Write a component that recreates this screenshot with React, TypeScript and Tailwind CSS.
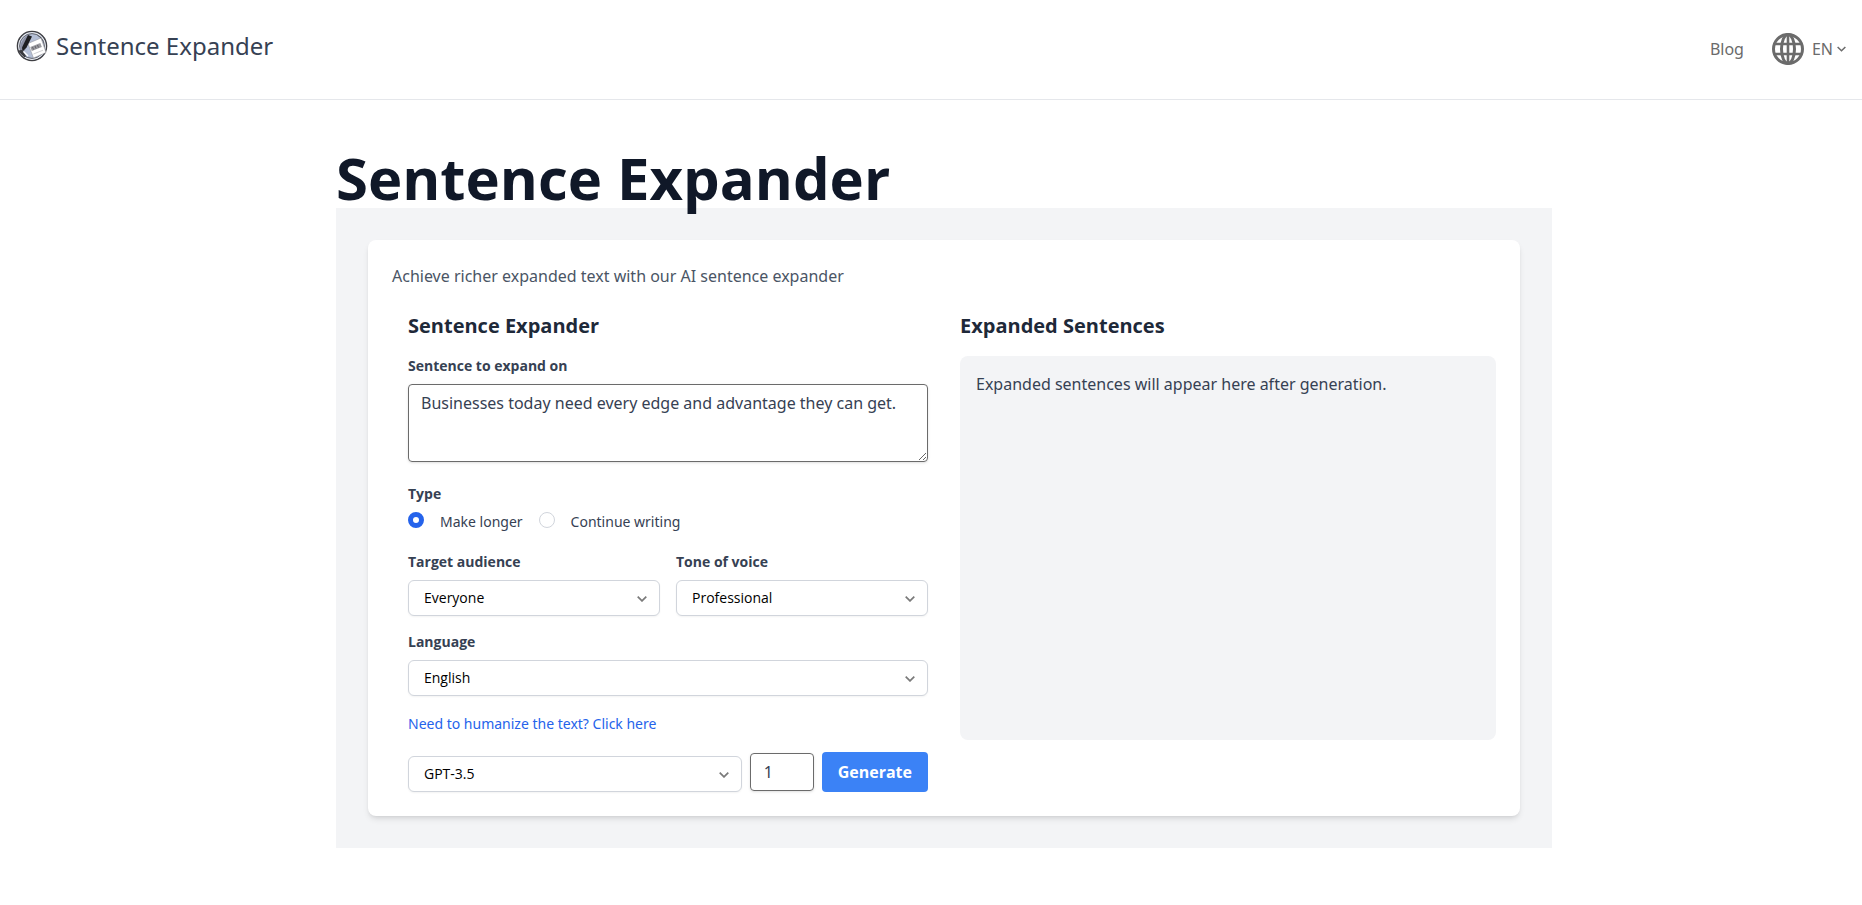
import { useState } from "react";
import type { ReactNode, SelectHTMLAttributes } from "react";

const TYPES = ["Make longer", "Continue writing"];

function Logo() {
  return (
    <svg viewBox="0 0 32 32" className="size-8" aria-hidden="true">
      <circle cx="16" cy="16" r="14.6" fill="#b4bfd6" stroke="#3f3f43" strokeWidth="1.4" />
      <circle cx="16" cy="16" r="13.300" fill="none" stroke="#f4f4f4" strokeWidth="1" />
      <circle cx="16" cy="16" r="12.400" fill="none" stroke="#4a4b52" strokeWidth="0.8" />
      <path d="M4 17c1-5 4-10 8-12l3 3-6 12-4 5z" fill="#8c90a3" />
      <path d="m20 4.500 5 3 3 6-4-6z" fill="#3f3f43" />
      <path d="M12 13.500 25 8l5 14.500L17.500 28z" fill="#fff" stroke="#8b8b90" strokeWidth="0.5" />
      <path d="m14.300 17 10-4 1.500 4-10 4z" fill="#9a9a9f" />
      <path d="m16.500 17 1 2.500m1.500-3.500 1 2.500m1.500-3.500 1 2.500" stroke="#55565c" strokeWidth="0.8" />
      <path d="m17.500 24 9.500-3.800" stroke="#c4c4c8" strokeWidth="0.8" />
      <path d="m12 5 4 1.500-5.500 11-4 4-.5-4z" fill="#1f1f22" />
      <path d="M2 20.500 6 20l4 6-1.500 1.500L5 24z" fill="#3a3a3e" />
      <path d="m7.500 21.500 4.500 4.500" stroke="#fff" strokeWidth="1.2" />
    </svg>
  );
}

function Globe() {
  return (
    <svg viewBox="0 0 32 32" className="size-8" fill="none" stroke="#6b6b6b" strokeWidth="3" aria-hidden="true">
      <circle cx="16" cy="16" r="14.500" />
      <ellipse cx="16" cy="16" rx="6.500" ry="14.500" />
      <path d="M16 1.500v29M2.500 11h27M2.500 21h27" strokeWidth="2.600" />
    </svg>
  );
}

function Chevron({ className }: { className?: string }) {
  return (
    <svg viewBox="0 0 10 6" className={className} fill="none" stroke="currentColor" strokeWidth="1.7" aria-hidden="true">
      <path d="m.7.7 4.300 4.200L9.300.7" />
    </svg>
  );
}

function Label({ htmlFor, children }: { htmlFor: string; children: ReactNode }) {
  return (
    <label htmlFor={htmlFor} className="mb-2 block font-['Open_Sans',sans-serif] text-sm font-bold text-gray-700">
      {children}
    </label>
  );
}

function Select({ options, ...props }: { options: string[] } & SelectHTMLAttributes<HTMLSelectElement>) {
  return (
    <div className="relative">
      <select
        {...props}
        className="h-9 w-full appearance-none rounded-md border border-gray-300 bg-white px-[15px] font-['Open_Sans',sans-serif] text-sm text-black shadow-xs"
      >
        {options.map((o) => (
          <option key={o}>{o}</option>
        ))}
      </select>
      <Chevron className="pointer-events-none absolute top-4 right-[13px] h-[6px] w-[10px] text-[#7a7a7a]" />
    </div>
  );
}

export default function App() {
  const [type, setType] = useState(TYPES[0]);

  return (
    <div className="bg-white font-['Noto_Sans','Open_Sans',sans-serif] text-gray-700">
      <header className="flex h-[100px] items-center justify-between border-b border-gray-200 px-4">
        <a href="#" className="mb-2 flex items-center gap-2 text-2xl">
          <Logo />
          Sentence Expander
        </a>
        <nav className="mb-[2px] flex items-center gap-7 text-base text-[#6b6b6b]">
          <a href="#">Blog</a>
          <button type="button" className="flex items-center gap-2">
            <Globe />
            <span className="flex items-center gap-1">
              EN
              <Chevron className="h-[6px] w-[9px]" />
            </span>
          </button>
        </nav>
      </header>

      <main className="pt-12 pl-[26px]">
        <div className="mx-auto max-w-7xl px-8">
          <h1 className="font-['Open_Sans',sans-serif] text-[58px] leading-[60px] font-bold text-gray-900">
            Sentence Expander
          </h1>
          <div className="bg-gray-100 p-8">
            <div className="rounded-lg bg-white p-6 shadow-md">
              <p className="text-base text-gray-600">Achieve richer expanded text with our AI sentence expander</p>
              <div className="mt-6 grid grid-cols-2">
                <form className="px-4" onSubmit={(e) => e.preventDefault()}>
                  <h2 className="mb-4 font-['Open_Sans',sans-serif] text-xl font-bold text-gray-800">Sentence Expander</h2>
                  <Label htmlFor="sentence">Sentence to expand on</Label>
                  <textarea
                    id="sentence"
                    defaultValue="Businesses today need every edge and advantage they can get."
                    className="block h-[78px] w-full rounded-sm border border-[#6b6b6b] px-3 py-[6px] text-base text-gray-700 shadow-sm"
                  />

                  <fieldset className="mt-[22px]">
                    <legend className="font-['Open_Sans',sans-serif] text-sm font-bold">Type</legend>
                    <div className="mt-2 flex gap-4">
                      {TYPES.map((t) => (
                        <label key={t} className="flex h-5 items-center gap-4 text-sm">
                          <input
                            type="radio"
                            name="type"
                            checked={type === t}
                            onChange={() => setType(t)}
                            className="mb-1 size-4 appearance-none rounded-full border border-gray-300 bg-white checked:border-[5px] checked:border-[#2563eb]"
                          />
                          {t}
                        </label>
                      ))}
                    </div>
                  </fieldset>

                  <div className="mt-5 grid grid-cols-2 gap-4">
                    <div>
                      <Label htmlFor="audience">Target audience</Label>
                      <Select id="audience" options={["Everyone", "Students", "Experts"]} />
                    </div>
                    <div>
                      <Label htmlFor="tone">Tone of voice</Label>
                      <Select id="tone" options={["Professional", "Casual", "Friendly"]} />
                    </div>
                  </div>

                  <div className="mt-4">
                    <Label htmlFor="language">Language</Label>
                    <Select id="language" options={["English", "Spanish", "French"]} />
                  </div>

                  <a href="#" className="my-[18px] block text-sm text-[#2563eb]">
                    Need to humanize the text? Click here
                  </a>

                  <div className="flex items-end gap-2">
                    <div className="flex-1">
                      <Select aria-label="Model" options={["GPT-3.5", "GPT-4"]} />
                    </div>
                    <input
                      type="text"
                      inputMode="numeric"
                      aria-label="Number of results"
                      defaultValue="1"
                      className="h-[38px] w-16 self-center rounded-sm border border-[#6b6b6b] px-[13px] text-base text-gray-700 shadow-sm"
                    />
                    <button
                      type="submit"
                      className="h-10 rounded-sm bg-[#3b82f6] px-4 font-['Open_Sans',sans-serif] text-base font-bold text-white"
                    >
                      Generate
                    </button>
                  </div>
                </form>

                <section className="pl-4">
                  <h2 className="mb-4 font-['Open_Sans',sans-serif] text-xl font-bold text-gray-800">Expanded Sentences</h2>
                  <div className="h-96 rounded-lg bg-gray-100 p-4">Expanded sentences will appear here after generation.</div>
                </section>
              </div>
            </div>
          </div>
        </div>
      </main>
    </div>
  );
}
